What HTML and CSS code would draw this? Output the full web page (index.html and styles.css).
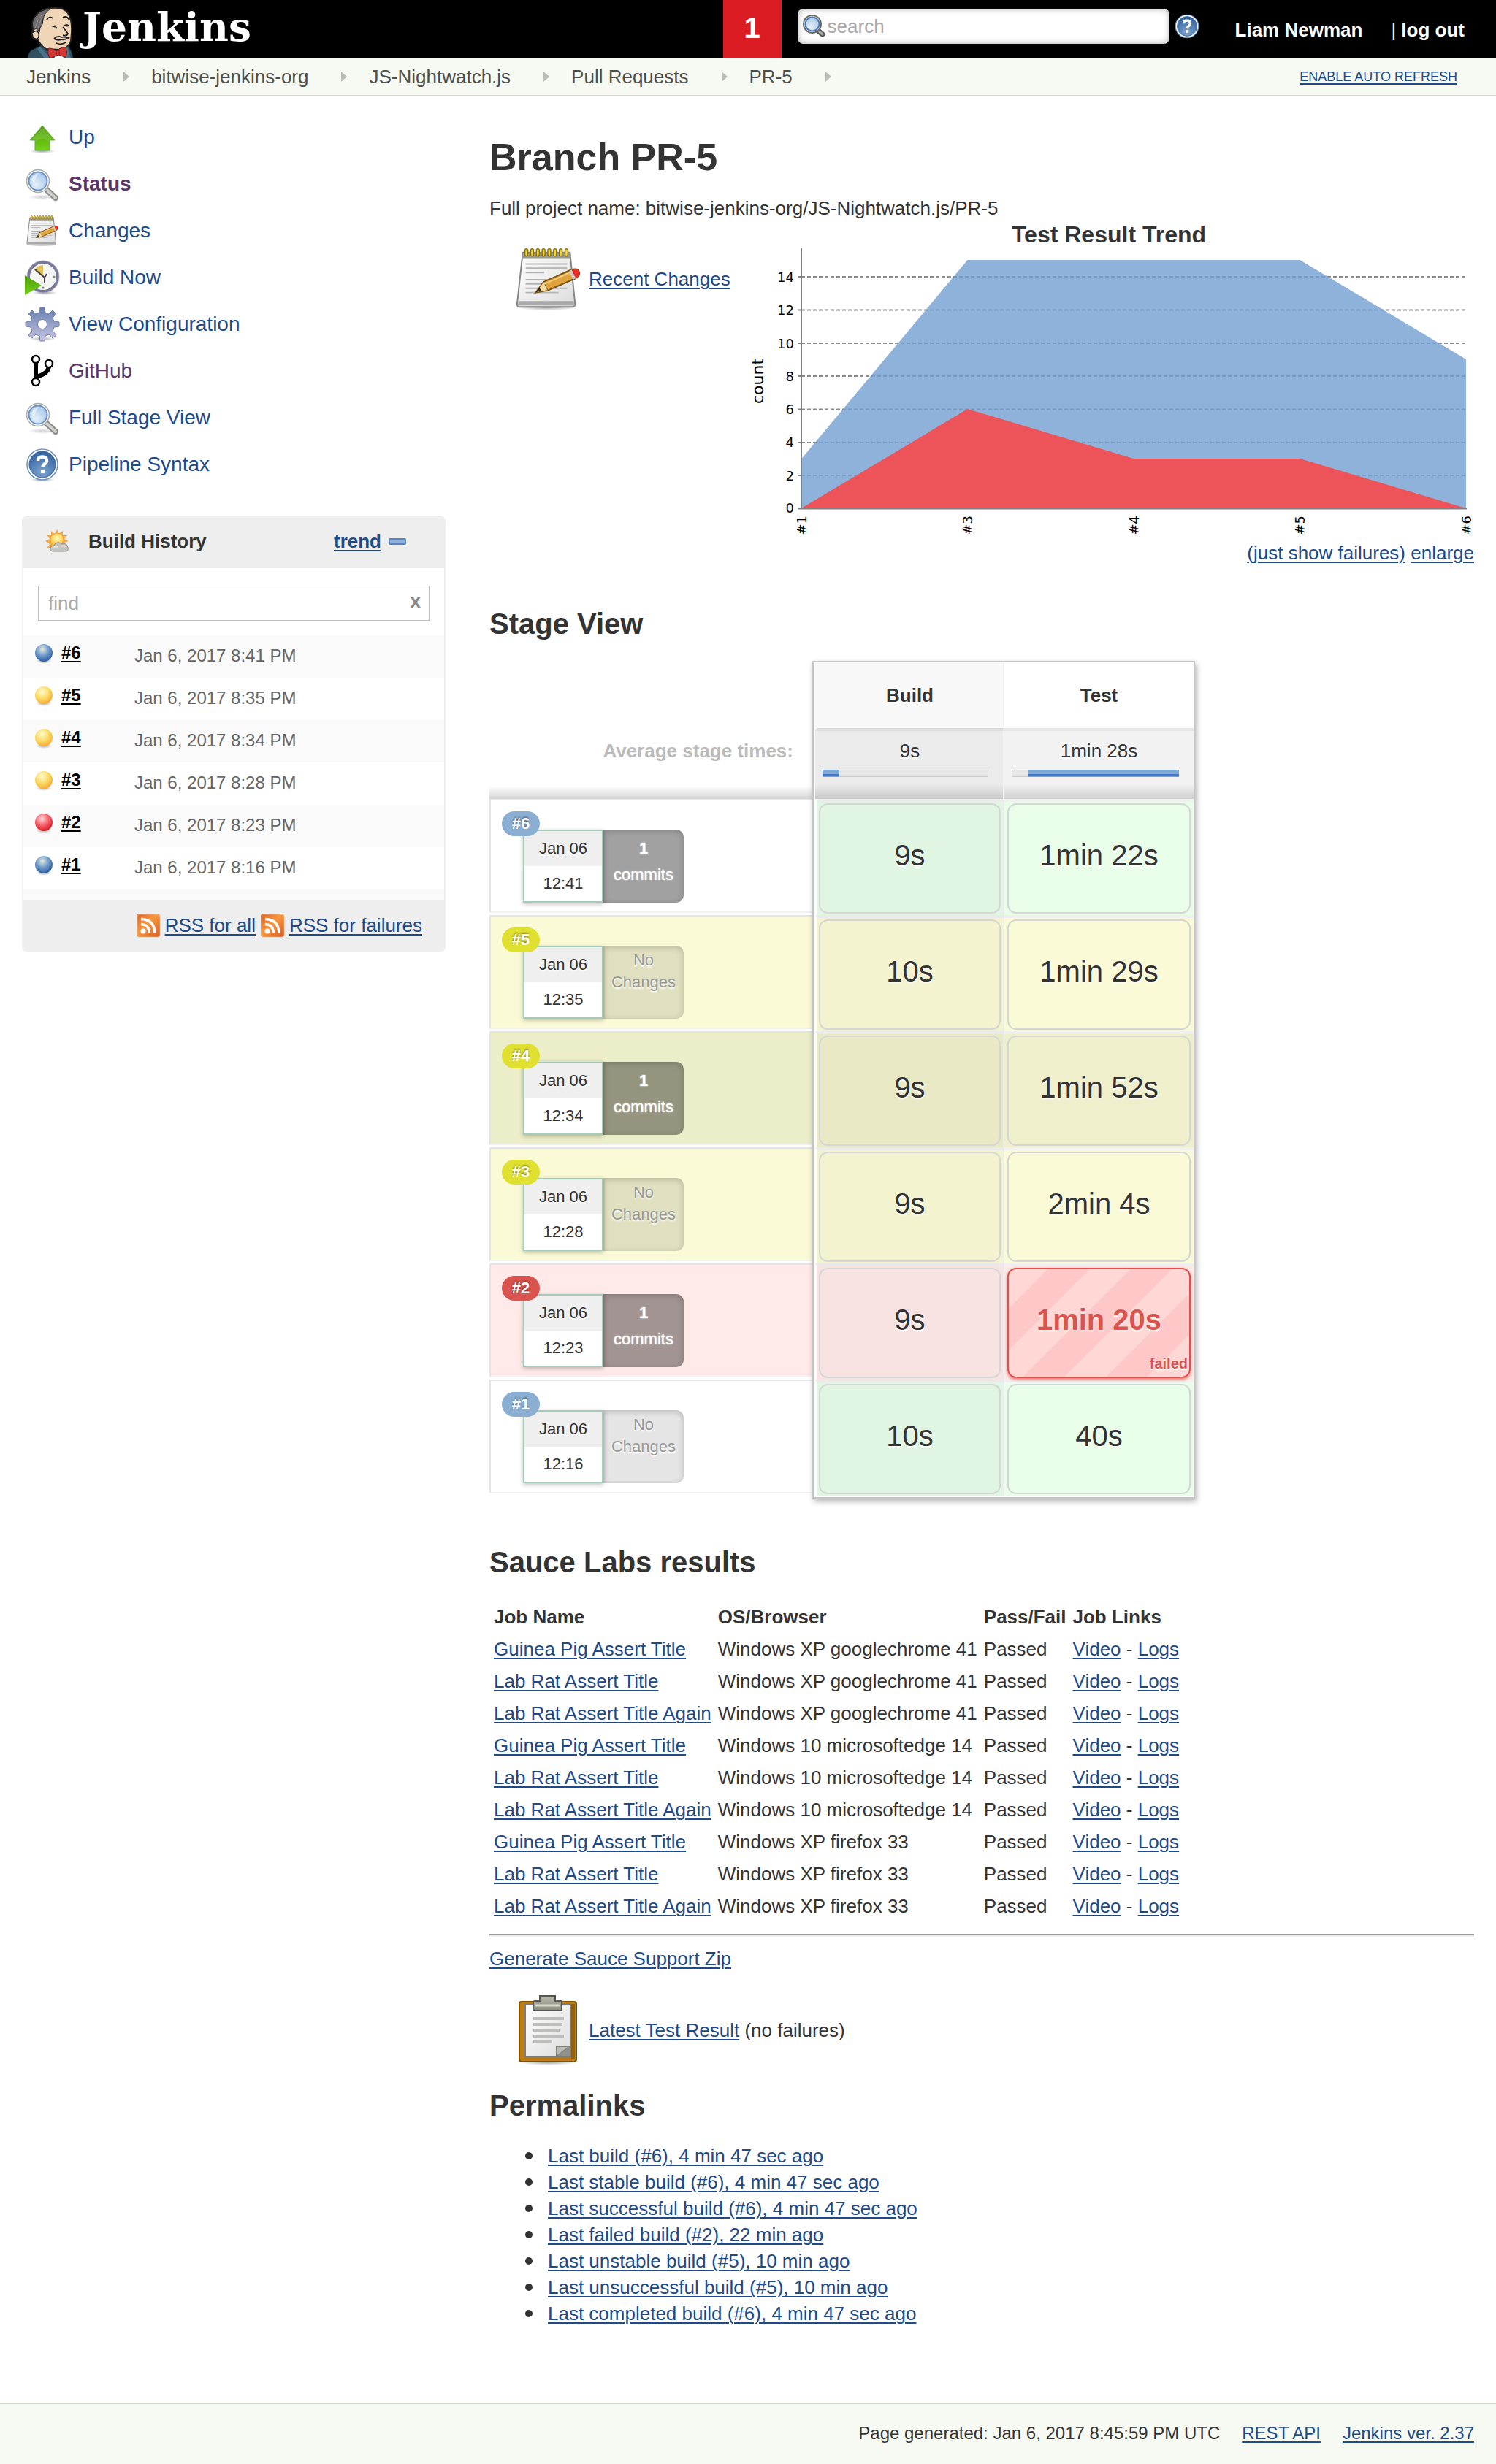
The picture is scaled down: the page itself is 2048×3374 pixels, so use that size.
FILE: index.html
```html
<!DOCTYPE html>
<html lang="en">
<head>
<meta charset="utf-8">
<title>PR-5 [Jenkins]</title>
<link rel="stylesheet" href="styles.css">
</head>
<body>
<svg class="defs" aria-hidden="true">
  <defs>
    <linearGradient id="g-green" x1="0" y1="0" x2="0" y2="1"><stop offset="0" stop-color="#4e9a06"/><stop offset="1" stop-color="#73d216"/></linearGradient>
    <linearGradient id="g-paper" x1="0" y1="0" x2="1" y2="1"><stop offset="0" stop-color="#fff"/><stop offset="1" stop-color="#dcdcdc"/></linearGradient>
    <linearGradient id="g-gear" x1="0" y1="0" x2="0" y2="1"><stop offset="0" stop-color="#6480b0"/><stop offset="1" stop-color="#c9c4e2"/></linearGradient>
    <linearGradient id="g-rss" x1="0" y1="0" x2="1" y2="1"><stop offset="0" stop-color="#d9612a"/><stop offset=".45" stop-color="#f8983e"/><stop offset="1" stop-color="#d65a26"/></linearGradient>
    <linearGradient id="g-clip" x1="0" y1="0" x2="0" y2="1"><stop offset="0" stop-color="#b9b9ab"/><stop offset="1" stop-color="#8b8b7e"/></linearGradient>
    <radialGradient id="g-lens" cx=".4" cy=".7" r=".8"><stop offset="0" stop-color="#e6f0fa"/><stop offset="1" stop-color="#9dc0e6"/></radialGradient>
    <radialGradient id="g-help" cx=".5" cy=".8" r=".8"><stop offset="0" stop-color="#7fa6d0"/><stop offset="1" stop-color="#2f5f9e"/></radialGradient>
    <radialGradient id="g-sun" cx=".5" cy=".4" r=".6"><stop offset="0" stop-color="#fff9b0"/><stop offset="1" stop-color="#fcc13c"/></radialGradient>
    <radialGradient id="g-blue" cx=".42" cy=".3" r=".75"><stop offset="0" stop-color="#e3eadf"/><stop offset=".45" stop-color="#78a0cd"/><stop offset="1" stop-color="#1f569d"/></radialGradient>
    <radialGradient id="g-yellow" cx=".4" cy=".3" r=".75"><stop offset="0" stop-color="#fffbd0"/><stop offset=".5" stop-color="#fbdc68"/><stop offset="1" stop-color="#f8a62c"/></radialGradient>
    <radialGradient id="g-red" cx=".4" cy=".3" r=".75"><stop offset="0" stop-color="#ffd9d9"/><stop offset=".5" stop-color="#f5636a"/><stop offset="1" stop-color="#dd0f1c"/></radialGradient>
    <radialGradient id="g-shadow"><stop offset="0" stop-color="#000" stop-opacity=".35"/><stop offset="1" stop-color="#000" stop-opacity="0"/></radialGradient>

    <symbol id="i-up" viewBox="0 0 48 48">
      <ellipse cx="24" cy="43" rx="18" ry="3" fill="url(#g-shadow)"/>
      <path d="M24 8 41 28H34V42H14V28H7Z" fill="url(#g-green)" stroke="#6aa84f" stroke-width="1"/>
      <path d="M24 10 38 27H33V30Q24 22 15 30V27H10Z" fill="#fff" opacity=".12"/>
    </symbol>
    <symbol id="i-search" viewBox="0 0 48 48">
      <ellipse cx="24" cy="42" rx="20" ry="4" fill="url(#g-shadow)" opacity=".5"/>
      <path d="M29 31 42 43" stroke="#8b8d88" stroke-width="8" stroke-linecap="round"/>
      <path d="M29 31 42 43" stroke="#cfcfcc" stroke-width="4" stroke-linecap="round"/>
      <circle cx="18" cy="20" r="15.500" fill="#fff" stroke="#a9aba6" stroke-width="1.500"/>
      <circle cx="18" cy="20" r="12.500" fill="url(#g-lens)" stroke="#6c92c2" stroke-width="2"/>
      <path d="M9 18Q12 9 20 9Q15 12 13 24Z" fill="#fff" opacity=".5"/>
    </symbol>
    <symbol id="i-lens" viewBox="0 0 32 32">
      <path d="M21 21 28 27" stroke="#555753" stroke-width="7" stroke-linecap="round"/>
      <path d="M21 21 28 27" stroke="#a9aaa6" stroke-width="3" stroke-linecap="round"/>
      <circle cx="14" cy="13" r="12" fill="#eee" stroke="#6a6c68" stroke-width="2"/>
      <circle cx="14" cy="13" r="9.500" fill="url(#g-lens)" stroke="#4c7ab6" stroke-width="2"/>
    </symbol>
    <symbol id="i-notepad" viewBox="-2 0 98 98">
      <ellipse cx="46" cy="89" rx="42" ry="4" fill="url(#g-shadow)"/>
      <path d="M12 12H78L85 84Q85 88 82 88H7Q4 88 4 84Z" fill="url(#g-paper)" stroke="#858585" stroke-width="2"/>
      <path d="M13 12H78L79 20H12Z" fill="#9a9a90"/>
      <path d="M6 80H83L84 86H5Z" fill="#a9a9a9"/>
      <g stroke="#b4b4b4" stroke-width="2"><path d="M16 28H74M16 34H74M16 40H42M16 50H60M16 56H50M16 62H74M16 68H62"/></g>
      <g fill="#f0d843" stroke="#8c6f06" stroke-width="1.500"><rect x="15" y="7" width="4" height="10" rx="2"/><rect x="23" y="7" width="4" height="10" rx="2"/><rect x="31" y="7" width="4" height="10" rx="2"/><rect x="39" y="7" width="4" height="10" rx="2"/><rect x="47" y="7" width="4" height="10" rx="2"/><rect x="55" y="7" width="4" height="10" rx="2"/><rect x="63" y="7" width="4" height="10" rx="2"/><rect x="71" y="7" width="4" height="10" rx="2"/></g>
      <path d="M30 68 41 53 80 36Q89 33 91 40Q92 44 86 48L47 65Z" fill="#e0a23c" stroke="#7a5413" stroke-width="2"/>
      <path d="M30 68 41 53 47 65Z" fill="#f5dca4" stroke="#7a5413" stroke-width="1"/>
      <path d="M30 68 35 61 38 65Z" fill="#3b2a0a"/>
      <path d="M80 36Q89 33 91 40Q92 44 86 48Z" fill="#ef2929"/>
      <path d="M77 38 80 36 86 48 82 50Z" fill="#ccc"/>
      <path d="M42 56 78 40" stroke="#f8cf7f" stroke-width="2"/>
    </symbol>
    <symbol id="i-clock" viewBox="0 0 48 48">
      <ellipse cx="27" cy="45" rx="18" ry="3" fill="url(#g-shadow)"/>
      <circle cx="25" cy="23" r="20" fill="#f4f4f2" stroke="#77789a" stroke-width="4"/>
      <circle cx="25" cy="23" r="22" fill="none" stroke="#b0b0c4" stroke-width="1"/>
      <path d="M25 23 13 14Q18 7 25 7Z" fill="#e3c25c"/>
      <path d="M14 13 27 24V32M27 24 30 19" fill="none" stroke="#444" stroke-width="2"/>
      <g fill="#888"><circle cx="40" cy="23" r="1.500"/><circle cx="25" cy="38" r="1.500"/></g>
      <path d="M0 21 23 35 0 48Z" fill="url(#g-green)"/>
    </symbol>
    <symbol id="i-gear" viewBox="0 0 48 48">
      <ellipse cx="24" cy="44" rx="18" ry="3" fill="url(#g-shadow)"/>
      <g fill="url(#g-gear)" stroke="#7480a8" stroke-width="1">
        <path fill-rule="evenodd" d="M21 1H27L28 8 33 10 38 5 43 10 38 15 40 20 47 21V27L40 28 38 33 43 39 38 43 33 38 28 40 27 47H21L20 40 15 38 10 43 5 39 10 33 8 28 1 27V21L8 20 10 15 5 10 10 5 15 10 20 8ZM24 17.500A6.500 6.500 0 1 0 24 30.500A6.500 6.500 0 1 0 24 17.500Z"/>
      </g>
    </symbol>
    <symbol id="i-branch" viewBox="0 0 48 48">
      <path d="M15 12V36M33 16Q33 28 15 32" fill="none" stroke="#000" stroke-width="6"/>
      <g fill="#fff" stroke="#000" stroke-width="2.500"><circle cx="15" cy="8" r="5"/><circle cx="15" cy="39" r="5"/><circle cx="33" cy="14" r="5"/></g>
    </symbol>
    <symbol id="i-help" viewBox="0 0 48 48">
      <ellipse cx="24" cy="45" rx="17" ry="3" fill="url(#g-shadow)"/>
      <circle cx="24" cy="24" r="21" fill="#fff" stroke="#7294c0" stroke-width="1.500"/>
      <circle cx="24" cy="24" r="18" fill="url(#g-help)" stroke="#3465a4" stroke-width="1"/>
      <path d="M18 19Q18 13.500 24 13.500Q30 13.500 30 18.500Q30 21.500 27 23.500Q24.500 25 24.500 28" fill="none" stroke="#fff" stroke-width="4.500"/>
      <rect x="22" y="31" width="5" height="5" fill="#fff"/>
    </symbol>
    <symbol id="i-weather" viewBox="0 0 32 32">
      <path d="M16 0 18 6 24 2 24 8 30 8 26 13 32 16 26 18 28 24 8 24 2 26 6 20 0 16 6 13 2 7 8 8 8 2 13 6Z" fill="#f7a94a"/>
      <circle cx="16" cy="14" r="9" fill="url(#g-sun)" stroke="#f3a33c"/>
      <path d="M11 30Q6 30 7 25Q8 22 12 22Q14 17 19 18Q22 19 23 20Q30 18 31 25Q32 30 28 30Z" fill="#c3c4bf" stroke="#8c8d88"/>
      <path d="M10 26Q13 22 17 24M22 23Q26 21 28 24" stroke="#e4e4e0" stroke-width="2" fill="none"/>
    </symbol>
    <symbol id="i-rss" viewBox="0 0 32 32">
      <rect width="32" height="32" rx="4" fill="url(#g-rss)"/>
      <rect x="1" y="1" width="30" height="30" rx="3" fill="none" stroke="#fff" opacity=".25"/>
      <circle cx="9" cy="24" r="3.500" fill="#fff"/>
      <path d="M6 14.500Q17 15 17.500 26.500M6 7.500Q24 8 25 26.500" fill="none" stroke="#fff" stroke-width="3.500"/>
    </symbol>
    <symbol id="i-clipboard" viewBox="0 0 96 96">
      <ellipse cx="48" cy="92" rx="40" ry="4" fill="url(#g-shadow)"/>
      <rect x="9" y="9" width="78" height="82" rx="3" fill="#c17d11" stroke="#7f5208" stroke-width="2"/>
      <rect x="80" y="12" width="5" height="76" fill="#96610c"/>
      <path d="M17 12H79V85H17Z" fill="url(#g-paper)" stroke="#7c7c78" stroke-width="2"/>
      <path d="M60 84V70H78Z" fill="#b9b9b6" stroke="#7c7c78" stroke-width="2"/>
      <path d="M60 84 78 70V84Z" fill="#8f8f8c"/>
      <path d="M28 32H70M28 40H68M28 48H64M28 56H70M28 64H54" stroke="#bdbdbb" stroke-width="4"/>
      <path d="M37 1H58V8H66Q67 8 67 10V21H28V10Q28 8 30 8H37Z" fill="url(#g-clip)" stroke="#555753" stroke-width="2"/>
      <path d="M30 14H65" stroke="#d6d6ca" stroke-width="3"/>
    </symbol>
    <symbol id="i-ball-blue" viewBox="0 0 28 28"><ellipse cx="14" cy="24" rx="11" ry="4" fill="url(#g-shadow)"/><circle cx="14" cy="13" r="12" fill="url(#g-blue)"/></symbol>
    <symbol id="i-ball-yellow" viewBox="0 0 28 28"><ellipse cx="14" cy="24" rx="11" ry="4" fill="url(#g-shadow)"/><circle cx="14" cy="13" r="12" fill="url(#g-yellow)"/></symbol>
    <symbol id="i-ball-red" viewBox="0 0 28 28"><ellipse cx="14" cy="24" rx="11" ry="4" fill="url(#g-shadow)"/><circle cx="14" cy="13" r="12" fill="url(#g-red)"/></symbol>
  </defs>
</svg>

<header class="header">
  <a class="logo" href="#">
    <svg class="logo-head" viewBox="0 0 64 70" aria-hidden="true">
      <path d="M9 34Q5 22 10 14Q16 3 33 1Q50 -1 56 8Q62 18 61 34L60 46Q56 57 44 58L26 57Q18 52 15 44Q8 44 7 38Q6 33 9 34Z" fill="#f0d6b7" stroke="#231f20" stroke-width="2"/>
      <path d="M9 31Q5 20 11 13Q18 3 32 2Q23 8 22 17Q22 24 18 28L17 34L13 29Z" fill="#6d6b6d" stroke="#231f20" stroke-width="1"/>
      <path d="M11 29Q14 17 20 11M15 29Q17 20 21 14" stroke="#9a989a" fill="none" stroke-width="1"/>
      <path d="M9 34Q14 30 16 36Q17 41 14 43" fill="#f0d6b7" stroke="#231f20" stroke-width="1.500"/>
      <path d="M27 17Q31 11 35 15M49 14Q54 11 58 17M35 27Q38 24 41 29M51 25Q55 23 58 26" stroke="#231f20" stroke-width="1.800" fill="none"/>
      <circle cx="38" cy="26" r="1.500" fill="#231f20"/><circle cx="55" cy="25" r="1.500" fill="#231f20"/>
      <path d="M49 27 56 36Q54 40 49 38M37 43Q42 38 47 41Q51 40 57 42Q51 45 47 44Q42 46 37 43M40 49Q47 52 53 48" stroke="#231f20" stroke-width="1.800" fill="none"/>
      <path d="M1 70Q2 60 8 58L20 52Q26 62 45 58L56 53Q62 60 63 70Z" fill="#335061" stroke="#1b3341" stroke-width="1"/>
      <path d="M18 54 33 70H24L14 57ZM49 58 54 70H60L56 55Z" fill="#49728b"/>
      <path d="M40 64H48L50 70H37Z" fill="#fff"/>
      <path d="M29 57Q31 54 40 60Q48 53 53 55Q56 62 53 68Q47 67 43 65Q36 68 31 70Q28 64 29 57Z" fill="#d33833" stroke="#7d1d1b" stroke-width="1"/>
      <path d="M40 60V66M44 58V65" stroke="#7d1d1b"/>
    </svg>
    <span class="logo-name">Jenkins</span>
  </a>
  <a class="alert-count" href="#">1</a>
  <form class="search">
    <label class="search-field">
      <svg class="icon-32" aria-hidden="true"><use href="#i-lens"/></svg>
      <input type="text" placeholder="search" aria-label="Search">
    </label>
    <a class="search-help" href="#" aria-label="Search help"><svg class="icon-36" aria-hidden="true"><use href="#i-help"/></svg></a>
  </form>
  <div class="login">
    <a href="#">Liam Newman</a>
    <span>| <a href="#">log out</a></span>
  </div>
</header>

<nav class="breadcrumbs" aria-label="Breadcrumb">
  <ul class="crumbs">
    <li><a href="#">Jenkins</a></li>
    <li><a href="#">bitwise-jenkins-org</a></li>
    <li><a href="#">JS-Nightwatch.js</a></li>
    <li><a href="#">Pull Requests</a></li>
    <li><a href="#">PR-5</a></li>
  </ul>
  <a class="auto-refresh" href="#">ENABLE AUTO REFRESH</a>
</nav>

<div class="page">
  <aside class="sidebar">
    <ul class="tasks">
      <li><svg class="icon-48" aria-hidden="true"><use href="#i-up"/></svg><a href="#">Up</a></li>
      <li><svg class="icon-48" aria-hidden="true"><use href="#i-search"/></svg><a class="visited current" href="#">Status</a></li>
      <li><svg class="icon-48" aria-hidden="true"><use href="#i-notepad"/></svg><a href="#">Changes</a></li>
      <li><svg class="icon-48" aria-hidden="true"><use href="#i-clock"/></svg><a href="#">Build Now</a></li>
      <li><svg class="icon-48" aria-hidden="true"><use href="#i-gear"/></svg><a href="#">View Configuration</a></li>
      <li><svg class="icon-48" aria-hidden="true"><use href="#i-branch"/></svg><a class="visited" href="#">GitHub</a></li>
      <li><svg class="icon-48" aria-hidden="true"><use href="#i-search"/></svg><a href="#">Full Stage View</a></li>
      <li><svg class="icon-48" aria-hidden="true"><use href="#i-help"/></svg><a href="#">Pipeline Syntax</a></li>
    </ul>

    <section class="history">
      <header class="history-head">
        <svg class="icon-32" aria-hidden="true"><use href="#i-weather"/></svg>
        <h2>Build History</h2>
        <a href="#">trend</a>
        <button class="collapse" type="button" aria-label="Collapse"></button>
      </header>
      <div class="history-find">
        <input type="text" placeholder="find" aria-label="Find build">
        <button type="button" aria-label="Clear">x</button>
      </div>
      <table class="builds">
        <tbody>
          <tr><td><svg class="ball" aria-hidden="true"><use href="#i-ball-blue"/></svg></td><td><a href="#">#6</a></td><td>Jan 6, 2017 8:41 PM</td></tr>
          <tr><td><svg class="ball" aria-hidden="true"><use href="#i-ball-yellow"/></svg></td><td><a href="#">#5</a></td><td>Jan 6, 2017 8:35 PM</td></tr>
          <tr><td><svg class="ball" aria-hidden="true"><use href="#i-ball-yellow"/></svg></td><td><a href="#">#4</a></td><td>Jan 6, 2017 8:34 PM</td></tr>
          <tr><td><svg class="ball" aria-hidden="true"><use href="#i-ball-yellow"/></svg></td><td><a href="#">#3</a></td><td>Jan 6, 2017 8:28 PM</td></tr>
          <tr><td><svg class="ball" aria-hidden="true"><use href="#i-ball-red"/></svg></td><td><a href="#">#2</a></td><td>Jan 6, 2017 8:23 PM</td></tr>
          <tr><td><svg class="ball" aria-hidden="true"><use href="#i-ball-blue"/></svg></td><td><a href="#">#1</a></td><td>Jan 6, 2017 8:16 PM</td></tr>
        </tbody>
      </table>
      <footer class="history-foot">
        <svg class="icon-32" aria-hidden="true"><use href="#i-rss"/></svg><a href="#">RSS for all</a>
        <svg class="icon-32" aria-hidden="true"><use href="#i-rss"/></svg><a href="#">RSS for failures</a>
      </footer>
    </section>
  </aside>

  <main class="main">
    <h1>Branch PR-5</h1>
    <p class="project-name">Full project name: bitwise-jenkins-org/JS-Nightwatch.js/PR-5</p>

    <div class="overview">
      <div class="summary">
        <svg class="icon-96" aria-hidden="true"><use href="#i-notepad"/></svg>
        <a href="#">Recent Changes</a>
      </div>
      <section class="trend">
        <h3>Test Result Trend</h3>
        <svg class="chart" viewBox="0 0 1000 400" role="img" aria-label="Test result counts for builds 1 to 6">
          <g class="grid"><path d="M79 40H989M79 85.500H989M79 131H989M79 176H989M79 221.500H989M79 267H989M79 312H989"/></g>
          <polygon class="area-passed" points="79,289.500 306.500,17 534,17 761.500,17 989,153 989,357 79,357"/>
          <polygon class="area-failed" points="79,357 306.500,221 534,289 761.500,289 989,357"/>
          <path class="axis" d="M79 1V357.500M74 357.500H990M74 40H79M74 85.500H79M74 131H79M74 176H79M74 221.500H79M74 267H79M74 312H79"/>
          <g class="ticks" text-anchor="end">
            <text x="69" y="47">14</text><text x="69" y="92">12</text><text x="69" y="138">10</text><text x="69" y="183">8</text>
            <text x="69" y="228">6</text><text x="69" y="273">4</text><text x="69" y="319">2</text><text x="69" y="363">0</text>
            <text transform="translate(86 367) rotate(-90)">#1</text>
            <text transform="translate(313 367) rotate(-90)">#3</text>
            <text transform="translate(541 367) rotate(-90)">#4</text>
            <text transform="translate(768 367) rotate(-90)">#5</text>
            <text transform="translate(996 367) rotate(-90)">#6</text>
          </g>
          <text class="axis-name" text-anchor="middle" transform="translate(27 183) rotate(-90)">count</text>
        </svg>
        <p class="trend-links"><a href="#">(just show failures)</a> <a href="#">enlarge</a></p>
      </section>
    </div>

    <h2>Stage View</h2>
    <div class="stage-view">
      <table class="stages">
        <thead>
          <tr class="stage-names"><td></td><th scope="col">Build</th><th scope="col">Test</th></tr>
          <tr class="stage-averages">
            <th scope="row">Average stage times:</th>
            <td>9s<div class="bar"><span style="width:10%"></span></div></td>
            <td>1min 28s<div class="bar bar-end"><span style="width:90%"></span></div></td>
          </tr>
        </thead>
        <tbody>
          <tr class="run success">
            <td><div class="run-info"><a class="run-no" href="#">#6</a><div class="run-date"><span>Jan 06</span><span>12:41</span></div><div class="commits"><b>1</b><span>commits</span></div></div></td>
            <td><div class="stage">9s</div></td><td><div class="stage">1min 22s</div></td>
          </tr>
          <tr class="run unstable">
            <td><div class="run-info"><a class="run-no" href="#">#5</a><div class="run-date"><span>Jan 06</span><span>12:35</span></div><div class="commits none">No Changes</div></div></td>
            <td><div class="stage">10s</div></td><td><div class="stage">1min 29s</div></td>
          </tr>
          <tr class="run unstable active">
            <td><div class="run-info"><a class="run-no" href="#">#4</a><div class="run-date"><span>Jan 06</span><span>12:34</span></div><div class="commits"><b>1</b><span>commits</span></div></div></td>
            <td><div class="stage">9s</div></td><td><div class="stage">1min 52s</div></td>
          </tr>
          <tr class="run unstable">
            <td><div class="run-info"><a class="run-no" href="#">#3</a><div class="run-date"><span>Jan 06</span><span>12:28</span></div><div class="commits none">No Changes</div></div></td>
            <td><div class="stage">9s</div></td><td><div class="stage">2min 4s</div></td>
          </tr>
          <tr class="run failure">
            <td><div class="run-info"><a class="run-no" href="#">#2</a><div class="run-date"><span>Jan 06</span><span>12:23</span></div><div class="commits"><b>1</b><span>commits</span></div></div></td>
            <td><div class="stage">9s</div></td><td><div class="stage stage-failed">1min 20s<span class="failed-label">failed</span></div></td>
          </tr>
          <tr class="run success">
            <td><div class="run-info"><a class="run-no" href="#">#1</a><div class="run-date"><span>Jan 06</span><span>12:16</span></div><div class="commits none">No Changes</div></div></td>
            <td><div class="stage">10s</div></td><td><div class="stage">40s</div></td>
          </tr>
        </tbody>
      </table>
    </div>

    <h2>Sauce Labs results</h2>
    <table class="sauce">
      <thead><tr><th scope="col">Job Name</th><th scope="col">OS/Browser</th><th scope="col">Pass/Fail</th><th scope="col">Job Links</th></tr></thead>
      <tbody>
        <tr><td><a href="#">Guinea Pig Assert Title</a></td><td>Windows XP googlechrome 41</td><td>Passed</td><td><a href="#">Video</a> - <a href="#">Logs</a></td></tr>
        <tr><td><a href="#">Lab Rat Assert Title</a></td><td>Windows XP googlechrome 41</td><td>Passed</td><td><a href="#">Video</a> - <a href="#">Logs</a></td></tr>
        <tr><td><a href="#">Lab Rat Assert Title Again</a></td><td>Windows XP googlechrome 41</td><td>Passed</td><td><a href="#">Video</a> - <a href="#">Logs</a></td></tr>
        <tr><td><a href="#">Guinea Pig Assert Title</a></td><td>Windows 10 microsoftedge 14</td><td>Passed</td><td><a href="#">Video</a> - <a href="#">Logs</a></td></tr>
        <tr><td><a href="#">Lab Rat Assert Title</a></td><td>Windows 10 microsoftedge 14</td><td>Passed</td><td><a href="#">Video</a> - <a href="#">Logs</a></td></tr>
        <tr><td><a href="#">Lab Rat Assert Title Again</a></td><td>Windows 10 microsoftedge 14</td><td>Passed</td><td><a href="#">Video</a> - <a href="#">Logs</a></td></tr>
        <tr><td><a href="#">Guinea Pig Assert Title</a></td><td>Windows XP firefox 33</td><td>Passed</td><td><a href="#">Video</a> - <a href="#">Logs</a></td></tr>
        <tr><td><a href="#">Lab Rat Assert Title</a></td><td>Windows XP firefox 33</td><td>Passed</td><td><a href="#">Video</a> - <a href="#">Logs</a></td></tr>
        <tr><td><a href="#">Lab Rat Assert Title Again</a></td><td>Windows XP firefox 33</td><td>Passed</td><td><a href="#">Video</a> - <a href="#">Logs</a></td></tr>
      </tbody>
    </table>
    <hr>
    <p class="support"><a href="#">Generate Sauce Support Zip</a></p>
    <div class="summary">
      <svg class="icon-96" aria-hidden="true"><use href="#i-clipboard"/></svg>
      <span><a href="#">Latest Test Result</a> (no failures)</span>
    </div>

    <h2 class="permalinks-title">Permalinks</h2>
    <ul class="permalinks">
      <li><a href="#">Last build (#6), 4 min 47 sec ago</a></li>
      <li><a href="#">Last stable build (#6), 4 min 47 sec ago</a></li>
      <li><a href="#">Last successful build (#6), 4 min 47 sec ago</a></li>
      <li><a href="#">Last failed build (#2), 22 min ago</a></li>
      <li><a href="#">Last unstable build (#5), 10 min ago</a></li>
      <li><a href="#">Last unsuccessful build (#5), 10 min ago</a></li>
      <li><a href="#">Last completed build (#6), 4 min 47 sec ago</a></li>
    </ul>
  </main>
</div>

<footer class="footer">
  <span>Page generated: Jan 6, 2017 8:45:59 PM UTC</span>
  <a href="#">REST API</a>
  <a href="#">Jenkins ver. 2.37</a>
</footer>
</body>
</html>
```

FILE: styles.css
```css
*, *::before, *::after { box-sizing: border-box; }

body {
  margin: 0;
  background: #fff;
  color: #333;
  font-family: Helvetica, "Liberation Sans", Arial, sans-serif;
  font-size: 26px;
  line-height: 36px;
}

a {
  color: #204a87;
  text-decoration-thickness: 2px;
  text-underline-offset: 3px;
}

h1, h2, h3, p, ul { margin: 0; padding: 0; }
ul { list-style: none; }
button, input { font: inherit; }

.defs { position: absolute; width: 0; height: 0; }
.icon-32 { width: 32px; height: 32px; flex: none; }
.icon-36 { width: 36px; height: 36px; flex: none; display: block; }
.icon-48 { width: 48px; height: 48px; flex: none; }
.icon-96 { width: 96px; height: 96px; flex: none; }

/* Top bar */
.header {
  display: flex;
  height: 80px;
  padding: 0 43px 0 37px;
  background: #000;
  color: #fff;
}
.logo {
  display: flex;
  gap: 12px;
  margin-right: auto;
  color: #fff;
  text-decoration: none;
}
.logo-head { width: 64px; height: 70px; align-self: flex-end; }
.logo-name {
  font-family: "DejaVu Serif", serif;
  font-weight: bold;
  font-size: 55px;
  line-height: 74px;
}
.alert-count {
  width: 80px;
  background: #dc1c23;
  color: #fff;
  font-size: 40px;
  font-weight: bold;
  line-height: 76px;
  text-align: center;
  text-decoration: none;
}
.search {
  display: flex;
  align-items: center;
  gap: 6px;
  height: 48px;
  margin: 12px 48px 0 22px;
}
.search-field {
  display: flex;
  align-items: center;
  width: 509px;
  height: 48px;
  padding: 0 6px;
  background: #fff;
  border-radius: 8px;
  box-shadow: inset 0 0 8px #aaa;
}
.search-field input {
  flex: 1;
  min-width: 0;
  padding: 0 3px;
  border: 0;
  outline: 0;
  background: none;
}
input::placeholder { color: #a9a9a9; opacity: 1; }
.login {
  display: flex;
  gap: 39px;
  line-height: 82px;
}
.login a { color: #fff; font-weight: bold; text-decoration: none; }

/* Breadcrumbs */
.breadcrumbs {
  display: flex;
  align-items: center;
  justify-content: space-between;
  height: 52px;
  padding: 0 53px 0 36px;
  background: #f6faf2;
  border-bottom: 2px solid #d3d7cf;
}
.crumbs { display: flex; gap: 30px; }
.crumbs li { display: flex; align-items: center; gap: 45px; }
.crumbs li::after {
  content: "";
  width: 8px;
  height: 14px;
  border: 7px solid transparent;
  border-left: 8px solid #babdb6;
  border-right: 0;
}
.crumbs a { color: #4d4f4b; text-decoration: none; }
.auto-refresh { font-size: 18px; }

/* Columns */
.page { display: flex; }
.sidebar { flex: none; width: 610px; padding: 24px 0 0 30px; }
.main { flex: 1; min-width: 0; padding: 53px 30px 104px 60px; }

.tasks { padding-left: 4px; }
.tasks li {
  display: flex;
  align-items: center;
  gap: 12px;
  height: 64px;
  font-size: 28px;
}
.tasks a { text-decoration: none; }
.tasks .visited { color: #5c3566; }
.tasks .current { font-weight: bold; }

/* Build history */
.history {
  margin-top: 38px;
  border: 2px solid #eee;
  border-radius: 8px;
  overflow: hidden;
}
.history-head {
  display: flex;
  align-items: center;
  height: 70px;
  padding: 0 52px 4px 30px;
  background: #eee;
}
.history-head h2 { flex: 1; margin: 0; padding-left: 27px; font-size: 26px; line-height: 36px; }
.history-head a { font-weight: bold; }
.collapse {
  width: 24px;
  height: 9px;
  margin-left: 10px;
  padding: 0;
  background: #8fb3dd;
  border: 2px solid #5584bf;
  border-radius: 2px;
}
.history-find {
  display: flex;
  align-items: center;
  height: 48px;
  margin: 24px 20px 20px;
  padding: 0 11px 0 13px;
  border: 1px solid #bbb;
}
.history-find input {
  flex: 1;
  min-width: 0;
  padding: 0;
  border: 0;
  outline: 0;
}
.history-find button {
  padding: 0 0 6px;
  border: 0;
  background: none;
  color: #888;
  font-weight: bold;
}
.builds { width: 100%; border-collapse: collapse; }
.builds tr { height: 58px; }
.builds tr:nth-child(odd) { background: #fafafa; }
.builds td { padding: 0; vertical-align: top; font-size: 24px; line-height: 56px; color: #666; }
.builds td:first-child { width: 52px; padding-left: 14px; }
.builds td:nth-child(2) { width: 100px; line-height: 48px; }
.builds a { color: #000; font-weight: bold; }
.ball { display: block; width: 28px; height: 28px; margin-top: 11px; }
.history-foot {
  display: flex;
  align-items: center;
  justify-content: flex-end;
  gap: 7px;
  height: 84px;
  padding-right: 30px;
  border-top: 14px solid #fafafa;
  background: #eee;
}

/* Headings */
h1 { font-size: 52px; line-height: 60px; }
h2 { margin-bottom: 27px; font-size: 40px; line-height: 48px; }
h3 { font-size: 32px; line-height: 36px; text-align: center; }
.project-name { margin-top: 22px; }

.summary { display: flex; align-items: center; gap: 8px; padding-left: 32px; }

.overview {
  display: flex;
  align-items: flex-start;
  justify-content: space-between;
  margin-bottom: 55px;
}
.overview .summary { padding-top: 31px; }
.trend { flex: 0 1 1000px; }
.chart { display: block; width: 100%; overflow: visible; }
.grid { fill: none; stroke: #8c8c8c; stroke-width: 2; stroke-dasharray: 5 3; }
.area-passed { fill: #729fcf; fill-opacity: .8; }
.area-failed { fill: #f05054; fill-opacity: .96; }
.axis { fill: none; stroke: #808080; stroke-width: 2; }
.ticks { font: 18px "DejaVu Sans", sans-serif; fill: #000; }
.axis-name { font: 22px "DejaVu Sans", sans-serif; fill: #000; }
.trend-links { text-align: right; }

/* Stage view */
.stage-view {
  position: relative;
  width: 964px;
  margin-bottom: 67px;
}
.stage-view::after {
  content: "";
  position: absolute;
  top: 0;
  right: -2px;
  bottom: -4px;
  width: 524px;
  border: 2px solid #c4c4c4;
  box-shadow: 2px 4px 8px rgba(0, 0, 0, .3);
  pointer-events: none;
}
.stages {
  width: 100%;
  table-layout: fixed;
  border-collapse: separate;
  border-spacing: 0;
  text-shadow: 0 2px 2px #fff;
}
.stages td, .stages th { padding: 0; text-align: center; vertical-align: top; }
.stages tr > :first-child { width: 446px; }
.stages tr > :nth-child(2) { border-left: 2px solid transparent; background-clip: padding-box; }

.stage-names th {
  height: 96px;
  padding-top: 29px;
  border-bottom: 4px solid #e6e6e6;
}
.stage-names th:nth-child(2) { background: #f8f8f8; border-right: 2px solid #f0f0f0; border-bottom-color: #ddd; }

.stage-averages td, .stage-averages th { height: 93px; padding-top: 12px; line-height: 30px; }
.stage-averages th {
  padding-right: 30px;
  background: linear-gradient(rgba(0, 0, 0, 0), rgba(0, 0, 0, .16)) 0 100% / 442px 18px no-repeat;
  color: #bbb;
  text-align: right;
}
.stages .stage-averages td:nth-child(2) { background: linear-gradient(#ebebeb 78%, #c8c8c8); border-right: 2px solid #f4f4f4; }
.stages .stage-averages td:nth-child(3) { background: linear-gradient(#f2f2f2 78%, #cfcfcf); }
.bar {
  display: flex;
  height: 10px;
  margin: 11px 20px 0 8px;
  background: #e6e6e6;
  box-shadow: inset 0 0 0 1px #ccc;
}
.bar-end { justify-content: flex-end; margin-left: 10px; }
.bar span { background: linear-gradient(#7fa9d3 0 60%, #4577cc 60% 80%, #6f9fdc 80%); }

.run td { height: 159px; border-top: 4px solid #f0f0f0; padding: 2px 4px; }
.run td:nth-child(2) { border-right: 2px solid #ececec; border-top-color: #eaeaea; padding: 2px 3px; }
.stages .run td:first-child { padding: 0 4px 3px 0; border: 0; }
.run-info {
  position: relative;
  display: flex;
  height: 156px;
  padding: 40px 0 0 44px;
  border: solid #e5e5e5;
  border-width: 2px 0 2px 2px;
  border-bottom-color: #f1f1f1;
  font-size: 22px;
}
.run-no {
  position: absolute;
  top: 15px;
  left: 15px;
  width: 52px;
  height: 34px;
  border-radius: 17px;
  color: #fff;
  font-weight: bold;
  line-height: 34px;
  text-decoration: none;
  text-shadow: 0 -2px 2px rgba(0, 0, 0, .35);
}
.run-date {
  width: 110px;
  height: 100px;
  border: 2px solid #a5cbb9;
  background: linear-gradient(#efefef 50%, #fff 50%);
  line-height: 48px;
  box-shadow: 0 2px 6px rgba(0, 0, 0, .25);
}
.run-date span { display: block; }
.commits {
  width: 110px;
  height: 100px;
  padding-top: 8px;
  border-radius: 0 10px 10px 0;
  background: rgba(0, 0, 0, .37);
  box-shadow: inset 0 2px 8px rgba(0, 0, 0, .2);
  color: #fff;
  text-shadow: 0 0 2px #fff;
}
.commits b, .commits span { display: block; }
.commits.none {
  padding: 5px 10px;
  background: rgba(0, 0, 0, .1);
  color: #999;
  line-height: 30px;
  text-shadow: 0 2px 2px #fff;
}

.stage {
  position: relative;
  height: 151px;
  border: 2px solid #d6d6d6;
  border-radius: 12px;
  font-size: 40px;
  line-height: 139px;
}
.stages .stage-failed {
  background: repeating-linear-gradient(135deg, #ffd8d5 0 38px, #ffc8c8 38px 78px, #ffd8d5 78px 80px);
  border-color: #d9534f;
  box-shadow: 0 2px 4px rgba(217, 83, 79, .8);
  color: #d9534f;
  font-weight: bold;
}
.failed-label {
  position: absolute;
  right: 2px;
  bottom: 6px;
  font-size: 20px;
  line-height: 24px;
}

.success .run-no { background: #8aafd3; }
.success td:nth-child(2) { background-color: #e0f5e2; }
.success td:nth-child(3) { background-color: #e8fee9; }
.unstable .run-no { background: #e0e031; }
.unstable .run-info { background: #fafad6; }
.unstable td:nth-child(2) { background-color: #f3f3d0; }
.unstable td:nth-child(3) { background-color: #fafad6; }
.active .run-info { background: #ecedc9; }
.active td:nth-child(2) { background-color: #e9e9c6; }
.active td:nth-child(3) { background-color: #efefcc; }
.failure .run-no { background: #d9534f; }
.failure .run-info { background: #ffeae9; }
.failure td:nth-child(2) { background-color: #f8e3e2; }
.failure td:nth-child(3) { background-color: #ffeae9; }

/* Test results */
.sauce { margin-left: 0; border-spacing: 4px; }
.sauce th, .sauce td { padding: 2px 3px 2px 2px; text-align: left; white-space: nowrap; }
hr {
  height: 4px;
  margin: 14px 0 12px;
  border: 0;
  border-top: 2px solid #9a9a9a;
  background: #eee;
}
.support { margin-bottom: 32px; }
.permalinks-title { margin-top: 31px; }
.permalinks { padding-left: 49px; }
.permalinks li { display: flex; align-items: center; gap: 21px; }
.permalinks li::before {
  content: "";
  width: 10px;
  height: 10px;
  border-radius: 50%;
  background: #333;
}

.footer {
  display: flex;
  justify-content: flex-end;
  gap: 30px;
  padding: 20px 30px 22px;
  border-top: 2px solid #d3d7cf;
  background: #f6faf2;
  font-size: 24px;
  line-height: 40px;
}
```
